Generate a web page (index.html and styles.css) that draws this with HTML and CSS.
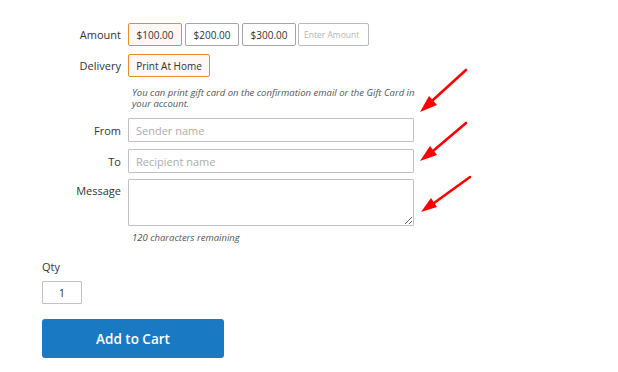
FILE: index.html
```html
<!DOCTYPE html>
<html lang="en">
<head>
    <meta charset="UTF-8">
    <meta name="viewport" content="width=device-width, initial-scale=1.0">
    <title>Gift Card</title>
    <link rel="stylesheet" href="styles.css">
</head>
<body>
    <div class="giftcard">
        <div class="field row-amount">
            <label class="label">Amount</label>
            <div class="options">
                <button class="opt selected">$100.00</button>
                <button class="opt">$200.00</button>
                <button class="opt">$300.00</button>
                <input class="custom" type="text" placeholder="Enter Amount">
            </div>
        </div>
        <div class="field row-delivery">
            <label class="label">Delivery</label>
            <div class="options">
                <button class="opt selected wide">Print At Home</button>
            </div>
        </div>
        <p class="note">You can print gift card on the confirmation email or the Gift Card in your account.</p>
        <div class="field row-input">
            <label class="label">From</label>
            <input class="text" type="text" placeholder="Sender name">
        </div>
        <div class="field row-input">
            <label class="label">To</label>
            <input class="text" type="text" placeholder="Recipient name">
        </div>
        <div class="field row-message">
            <label class="label top">Message</label>
            <textarea class="text area"></textarea>
        </div>
        <p class="note remaining">120 characters remaining</p>
    </div>

    <div class="cart">
        <div class="qty-label">Qty</div>
        <input class="qty" type="text" value="1">
        <button class="add">Add to Cart</button>
    </div>

    <!-- callout arrows drawn over the form -->
    <svg class="arrows" width="618" height="372" viewBox="0 0 618 372">
        <g stroke="#f00" stroke-width="2.6" stroke-linecap="round" fill="#f00">
            <line x1="466" y1="70" x2="433" y2="100"/>
            <polygon stroke="none" points="420,112 437,105 429,96"/>
            <line x1="466" y1="123" x2="433" y2="151"/>
            <polygon stroke="none" points="420,161 437,155 430,146"/>
            <line x1="470" y1="177" x2="434" y2="203"/>
            <polygon stroke="none" points="421,212 437,207 431,198"/>
        </g>
    </svg>
</body>
</html>
```

FILE: styles.css
```css
body {
    margin: 0;
    padding: 0;
    font-family: "Open Sans", Arial, sans-serif;
    color: #333;
    background-color: #fff;
    position: relative;
    width: 618px;
    height: 372px;
    overflow: hidden;
}
.giftcard {
    padding-top: 23px;
}
.field {
    display: flex;
    gap: 7px;
    align-items: center;
}
.label {
    width: 121px;
    text-align: right;
    font-size: 11px;
    color: #333;
}
.label.top {
    align-self: flex-start;
    padding-top: 4px;
}
.options {
    display: flex;
    gap: 3px;
}
.opt {
    height: 23px;
    width: 54px;
    padding: 0;
    font-family: inherit;
    font-size: 10px;
    color: #333;
    background-color: #fff;
    border: 1px solid #a6a6a6;
    border-radius: 2px;
}
.opt.selected {
    border-color: #e98a2b;
    background-color: #fdf8f3;
}
.opt.wide {
    width: 82px;
}
.custom {
    box-sizing: border-box;
    height: 23px;
    width: 71px;
    margin-left: -1px;
    padding: 0 5px;
    font-family: inherit;
    font-size: 8.5px;
    border: 1px solid #bbb;
    border-radius: 2px;
}
.custom::placeholder {
    color: #b5b5b5;
}
.row-delivery {
    margin-top: 8px;
}
.note {
    margin: 10px 0 0 132px;
    width: 286px;
    font-size: 9.5px;
    line-height: 11px;
    font-style: italic;
    color: #555;
}
.row-input {
    margin-top: 7px;
}
.note + .row-input {
    margin-top: 9px;
}
.text {
    box-sizing: border-box;
    width: 286px;
    height: 24px;
    padding: 0 7px;
    font-family: inherit;
    font-size: 11px;
    border: 1px solid #c2c2c2;
    border-radius: 1px;
    margin: 0;
}
.text::placeholder {
    color: #adadad;
}
.row-message {
    margin-top: 6px;
}
.area {
    height: 47px;
    padding: 4px 7px;
    resize: vertical;
    display: block;
}
.remaining {
    margin-top: 6px;
}
.cart {
    padding-left: 42px;
    margin-top: 17px;
}
.qty-label {
    font-size: 11px;
    line-height: 14px;
    color: #333;
}
.qty {
    display: block;
    box-sizing: border-box;
    width: 40px;
    height: 23px;
    margin-top: 7px;
    text-align: center;
    font-family: inherit;
    font-size: 11px;
    color: #333;
    border: 1px solid #c2c2c2;
    border-radius: 1px;
}
.add {
    display: block;
    margin-top: 15px;
    width: 182px;
    height: 39px;
    border: none;
    border-radius: 3px;
    background-color: #1979c3;
    color: #fff;
    font-family: inherit;
    font-size: 13.5px;
    font-weight: 600;
}
.arrows {
    position: absolute;
    top: 0;
    left: 0;
    pointer-events: none;
}
```
